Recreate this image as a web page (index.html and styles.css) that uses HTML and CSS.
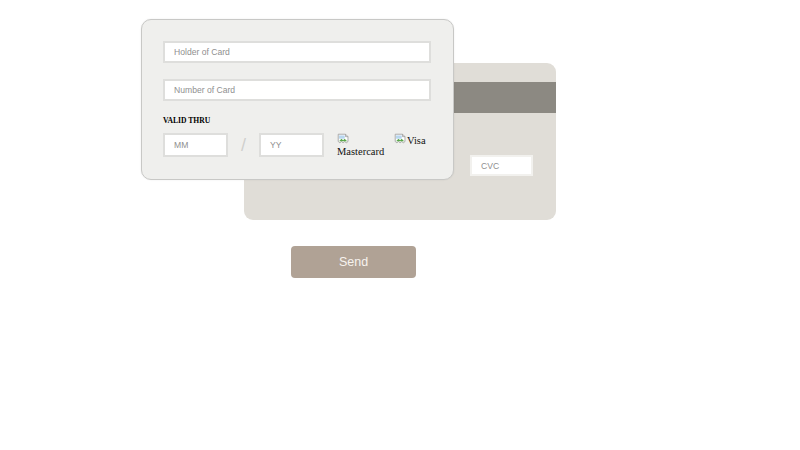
FILE: index.html
```html
<!DOCTYPE html>
<html>
<head>
<meta charset="utf-8">
<link rel="stylesheet" href="styles.css">
</head>
<body>
<div class="page">
  <div class="cards">
    <div class="card-back">
      <div class="stripe"></div>
      <div class="field cvc">CVC</div>
    </div>
    <div class="card-front">
      <div class="field wide">Holder of Card</div>
      <div class="field wide second">Number of Card</div>
      <div class="valid">VALID THRU</div>
      <div class="row">
        <div class="field small">MM</div>
        <div class="slash">/</div>
        <div class="field small">YY</div>
        <div class="brand master">
          <svg class="broken" viewBox="0 0 16 16" width="13" height="13"><path d="M1.5 1.5h9l3 3v6l-2 1.5-2-1.5-2 1.5-2-1.5-2 1.5-2-1.5z" fill="#fff" stroke="#9a9a9a"/><path d="M10.5 1.5v3h3" fill="none" stroke="#9a9a9a"/><path d="M2.5 10l3-3 2 2 2-2 3 3" fill="#5aa84a"/><rect x="2.5" y="3" width="7" height="4" fill="#b8d6ef"/></svg><span class="alt">Mastercard</span>
        </div>
        <div class="brand visa">
          <svg class="broken" viewBox="0 0 16 16" width="13" height="13"><path d="M1.5 1.5h9l3 3v6l-2 1.5-2-1.5-2 1.5-2-1.5-2 1.5-2-1.5z" fill="#fff" stroke="#9a9a9a"/><path d="M10.5 1.5v3h3" fill="none" stroke="#9a9a9a"/><path d="M2.5 10l3-3 2 2 2-2 3 3" fill="#5aa84a"/><rect x="2.5" y="3" width="7" height="4" fill="#b8d6ef"/></svg><span class="alt">Visa</span>
        </div>
      </div>
    </div>
  </div>
  <button class="send">Send</button>
</div>
</body>
</html>
```

FILE: styles.css
```css
body {
  margin: 0;
  background: #ffffff;
  font-family: "Liberation Sans", Arial, sans-serif;
}

.page {
  padding: 19px 0 0 141px;
}

.cards {
  display: grid;
  width: 415px;
}

.card-back,
.card-front {
  grid-area: 1 / 1;
  box-sizing: border-box;
}

.card-back {
  margin: 44px 0 0 103px;
  width: 312px;
  height: 157px;
  background: #e0ddd7;
  border-radius: 9px;
  padding-top: 19px;
}

.stripe {
  height: 31px;
  background: #8c8982;
}

.field {
  box-sizing: border-box;
  background: #ffffff;
  border: 2px solid #dededc;
  color: #8f8f8f;
  font-size: 8.6px;
  padding: 0 9px;
  display: flex;
  align-items: center;
}

.cvc {
  margin: 42px 0 0 226px;
  width: 63px;
  height: 21px;
  border-color: #f2f1ee;
}

.card-front {
  z-index: 1;
  width: 313px;
  height: 161px;
  background: #efefed;
  border: 1px solid #c8c8c6;
  border-radius: 10px;
  box-shadow: 0 0 2px rgba(0, 0, 0, 0.08);
  padding: 21px 22px 0 21px;
}

.wide {
  width: 268px;
  height: 22px;
}

.second {
  margin-top: 16px;
}

.valid {
  margin-top: 14px;
  font-family: "Liberation Serif", "Times New Roman", serif;
  font-weight: bold;
  font-size: 7.6px;
  line-height: 12px;
  color: #000;
}

.row {
  margin-top: 6px;
  display: flex;
  align-items: flex-start;
}

.small {
  width: 65px;
  height: 24px;
}

.slash {
  width: 31px;
  text-align: center;
  font-size: 18px;
  line-height: 24px;
  color: #d0d0ce;
  font-weight: 300;
}

.brand {
  font-family: "Liberation Serif", "Times New Roman", serif;
  font-size: 10.5px;
  line-height: 11px;
  color: #111;
}

.broken {
  display: inline-block;
  vertical-align: bottom;
}

.master {
  margin-left: 13px;
  width: 46px;
}

.master .broken {
  display: block;
}

.master .alt {
  display: block;
}

.visa {
  margin-left: 11px;
}

.send {
  display: block;
  margin: 26px 0 0 150px;
  width: 125px;
  height: 32px;
  background: #b0a295;
  border: none;
  border-radius: 4px;
  color: #f7f3ee;
  font-family: "Liberation Sans", Arial, sans-serif;
  font-size: 12.5px;
}
```
